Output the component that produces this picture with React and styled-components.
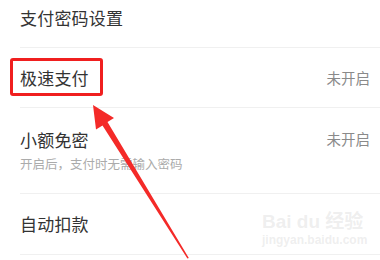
import React from "react";
import styled, { createGlobalStyle } from "styled-components";

const GlobalStyle = createGlobalStyle`
  html, body {
    margin: 0;
    padding: 0;
    background: #fff;
    overflow: hidden;
  }
  body {
    font-family: "Noto Sans CJK SC", "Noto Sans", sans-serif;
  }
`;

const Page = styled.div`
  position: relative;
  width: 380px;
  height: 260px;
  overflow: hidden;
  background: #fff;
`;

const List = styled.div`
  display: flex;
  flex-direction: column;
  margin-top: -12px;
`;

const Row = styled.div`
  display: flex;
  align-items: center;
  justify-content: space-between;
  margin-left: 20px;
  padding-right: 10px;
  height: ${(p) => p.h}px;
  border-bottom: 1.5px solid #f0f0f0;
  box-sizing: border-box;
`;

const Labels = styled.div`
  display: flex;
  flex-direction: column;
  gap: 6px;
`;

const Title = styled.div`
  font-size: 17px;
  line-height: 20px;
  color: #333;
  letter-spacing: 0.2px;
`;

const Sub = styled.div`
  font-size: 12.5px;
  line-height: 16px;
  color: #ababab;
`;

const Status = styled.div`
  font-size: 14.5px;
  color: #8a8a8a;
  margin-top: ${(p) => p.offset || 0}px;
`;

const Highlight = styled.div`
  position: absolute;
  left: 10px;
  top: 58px;
  width: 93px;
  height: 38px;
  border: 3px solid #f01f1f;
  border-radius: 3px;
  box-sizing: border-box;
`;

const Arrow = styled.svg`
  position: absolute;
  left: 0;
  top: 0;
  pointer-events: none;
`;

const Watermark = styled.div`
  position: absolute;
  left: 262px;
  top: 212px;
  display: flex;
  flex-direction: column;
  align-items: flex-start;
  white-space: nowrap;
  color: rgba(200, 200, 200, 0.3);
  font-family: "Liberation Sans", "Noto Sans CJK SC", sans-serif;
`;

const MarkTop = styled.div`
  font-size: 19px;
  line-height: 20px;
  font-weight: bold;
`;

const MarkUrl = styled.div`
  font-size: 12px;
  line-height: 16px;
  font-weight: bold;
`;

const rows = [
  { title: "支付密码设置", h: 60 },
  { title: "极速支付", status: "未开启", h: 60 },
  { title: "小额免密", sub: "开启后，支付时无需输入密码", status: "未开启", h: 86, offset: -24 },
  { title: "自动扣款", h: 61 },
];

export default function App() {
  return (
    <Page>
      <GlobalStyle />
      <List>
        {rows.map((r) => (
          <Row key={r.title} h={r.h}>
            <Labels>
              <Title>{r.title}</Title>
              {r.sub && <Sub>{r.sub}</Sub>}
            </Labels>
            {r.status && <Status offset={r.offset}>{r.status}</Status>}
          </Row>
        ))}
      </List>
      <Watermark>
        <MarkTop>Bai du 经验</MarkTop>
        <MarkUrl>jingyan.baidu.com</MarkUrl>
      </Watermark>
      <Highlight />
      <Arrow width="380" height="260" viewBox="0 0 380 260">
        <polygon
          points="93,105 114,118 107.5,122 188.8,258 187.4,258.6 102.5,125.5 96,129.5"
          fill="#f42a28"
        />
      </Arrow>
    </Page>
  );
}
